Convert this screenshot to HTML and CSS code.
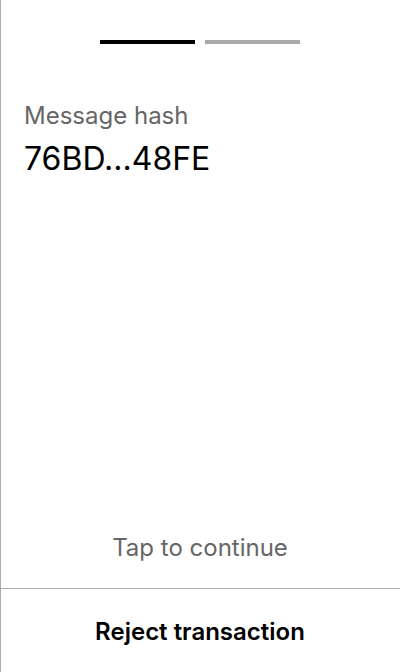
FILE: index.html
```html
<!DOCTYPE html>
<html>
<head>
<meta charset="utf-8">
<link rel="stylesheet" href="styles.css">
</head>
<body>
<div class="screen">
  <div class="progress">
    <span class="bar bar-active"></span>
    <span class="bar bar-inactive"></span>
  </div>
  <div class="content">
    <div class="label">Message hash</div>
    <div class="value">76BD...48FE</div>
  </div>
  <div class="hint">Tap to continue</div>
  <div class="footer">
    <button class="reject">Reject transaction</button>
  </div>
</div>
</body>
</html>
```
FILE: styles.css
```css
html, body {
  margin: 0;
  padding: 0;
  background: #fff;
}
body {
  font-family: Inter, "Noto Sans", sans-serif;
}
.screen {
  height: 672px;
  box-sizing: border-box;
  box-shadow: inset 1px 0 0 #aaaaaa;
  display: flex;
  flex-direction: column;
}
.progress {
  display: flex;
  justify-content: center;
  gap: 10px;
  padding-top: 40px;
}
.bar {
  display: block;
  width: 95px;
  height: 4px;
}
.bar-active { background: #000; }
.bar-inactive { background: #aaaaaa; }
.content {
  padding: 57px 24px 0;
  flex: 1;
}
.label {
  font-size: 24px;
  color: #666666;
  line-height: 29px;
}
.value {
  font-size: 32px;
  color: #000;
  line-height: 38px;
  margin-top: 10px;
}
.hint {
  text-align: center;
  font-size: 24px;
  color: #666666;
  line-height: 29px;
  padding-bottom: 26px;
}
.footer {
  border-top: 1px solid #aaaaaa;
  margin-left: 1px;
  height: 84px;
  box-sizing: border-box;
  padding-top: 28px;
  display: flex;
  align-items: flex-start;
}
.reject {
  flex: 1;
  border: none;
  background: transparent;
  font-family: Inter, "Noto Sans", sans-serif;
  font-size: 24px;
  line-height: 29px;
  font-weight: 600;
  color: #000;
  padding: 0;
  margin-left: -1px;
}
```
